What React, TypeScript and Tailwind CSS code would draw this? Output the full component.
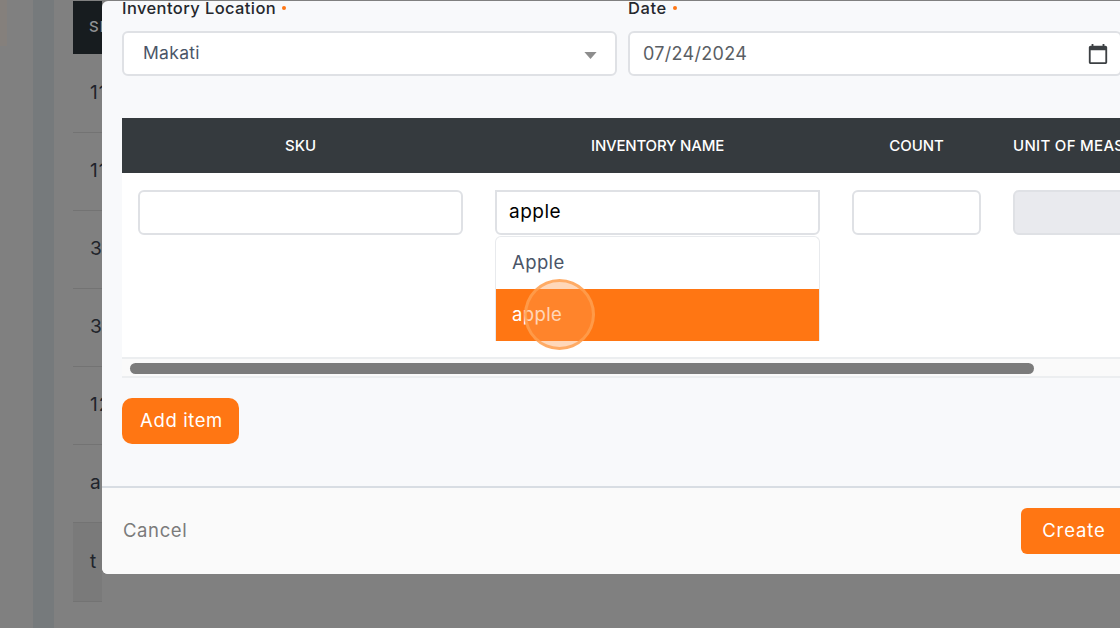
const font = { fontFamily: "Inter, 'Open Sans', sans-serif" };

const bgRows = ["11", "11", "3", "3", "12", "a", "t"];

function Dot() {
  return <span className="ml-[6px] mb-[1px] inline-block h-[4px] w-[4px] rounded-full bg-[#ff7613]" />;
}

function BackgroundTable() {
  return (
    <div className="mt-[1px] w-[29px] shrink-0 overflow-hidden whitespace-nowrap text-[#20242b]">
      <div className="flex h-[53px] items-center bg-[#171c1f] pl-[16px] text-[15px] font-medium tracking-[1px] text-[#8f9294]">SK</div>
      {bgRows.map((text, i) => (
        <div
          key={i}
          className={`flex items-center border-b border-[#737373] pl-[17px] text-[19px] tracking-[1px] ${i === 0 || i === 6 ? "h-[79px]" : "h-[78px]"} ${i === 6 ? "bg-[#7a7a7a]" : ""}`}
        >
          {text}
        </div>
      ))}
    </div>
  );
}

export default function App() {
  return (
    <div className="flex h-[628px] w-[1120px] overflow-hidden bg-[#808080]" style={font}>
      <div className="flex w-[73px] shrink-0">
        <div className="w-[33px]">
          <div className="h-[46px] w-[7px] bg-[#85807c]" />
        </div>
        <div className="w-[21px] bg-[#767a7c]" />
      </div>
      <BackgroundTable />

      <div className="mt-[1px] flex h-[573px] w-[1041px] shrink-0 flex-col overflow-hidden rounded-[6px] bg-[#f8f9fb]">
        <div className="h-[485px] px-[20px]">
          <div className="flex gap-[11px]">
            <div className="w-[495px]">
              <div className="flex h-[30px] items-center pb-[16px] text-[16.5px] font-medium leading-none tracking-[0.4px] text-[#25282d]">
                Inventory Location <Dot />
              </div>
              <div className="flex h-[45px] items-center justify-between rounded-[6px] border-2 border-[#dfe1e5] bg-white pl-[19px] pr-[18px] text-[17.5px] tracking-[0.3px] text-[#4a5568]">
                Makati
                <svg width="13" height="7" viewBox="0 0 14 8" className="mt-[4px]">
                  <polygon points="0,0 14,0 7,8" fill="#8d8d8d" />
                </svg>
              </div>
            </div>
            <div className="w-[494px]">
              <div className="flex h-[30px] items-center pb-[16px] text-[16.5px] font-medium leading-none tracking-[0.6px] text-[#25282d]">
                Date <Dot />
              </div>
              <div className="flex h-[45px] items-center justify-between rounded-[6px] border-2 border-[#dfe1e5] bg-white pl-[13px] pr-[11px] text-[18px] tracking-[0.3px] text-[#5a5e64]">
                07/24/2024
                <svg width="22" height="22" viewBox="0 0 24 24">
                  <path
                    d="M20 3h-1V1h-2v2H7V1H5v2H4c-1.1 0-2 .9-2 2v16c0 1.1.9 2 2 2h16c1.1 0 2-.9 2-2V5c0-1.1-.9-2-2-2zm0 18H4V8h16v13z"
                    fill="#3c4043"
                  />
                </svg>
              </div>
            </div>
          </div>

          <div className="mt-[42px]">
            <div className="flex h-[55px] items-center whitespace-nowrap bg-[#353a3e] pt-[1px] text-center text-[15px] font-medium text-white">
              <div className="w-[357px]">SKU</div>
              <div className="w-[357px] tracking-[-0.2px]">INVENTORY NAME</div>
              <div className="w-[161px]">COUNT</div>
              <div className="w-[125px] overflow-hidden pl-[16px] text-left tracking-[0.3px]">UNIT OF MEASURE</div>
            </div>

            <div className="flex h-[186px] border-b-2 border-[#eceef0] bg-white pt-[17px]">
              <div className="w-[357px] px-[16px]">
                <div className="h-[45px] rounded-[6px] border-2 border-[#dfe1e5] bg-white" />
              </div>
              <div className="relative w-[357px] px-[16px]">
                <div className="flex h-[45px] items-center rounded-b-[6px] border-2 border-[#dfe1e5] bg-white pl-[12px] text-[19px] tracking-[0.5px] text-black">
                  apple
                </div>
                <div className="absolute left-[16px] top-[46px] w-[325px] overflow-hidden rounded-t-[6px] border border-b-0 border-[#e8eaed] bg-white text-[18.5px] tracking-[0.4px]">
                  <div className="flex h-[52px] items-center pl-[16px] text-[#4a5568]">Apple</div>
                  <div className="flex h-[52px] items-center bg-[#ff7613] pl-[16px] text-white">apple</div>
                </div>
                <div className="absolute left-[45px] top-[89px] h-[71px] w-[71px] rounded-full border-[3px] border-[#ffa050]/80 bg-[#ff9a50]/40" />
              </div>
              <div className="w-[161px] px-[16px]">
                <div className="h-[45px] rounded-[6px] border-2 border-[#dfe1e5] bg-white" />
              </div>
              <div className="w-[125px] pl-[16px]">
                <div className="h-[45px] w-[140px] rounded-[6px] border-2 border-[#dfe1e5] bg-[#e9eaee]" />
              </div>
            </div>

            <div className="flex h-[19px] items-start border-b-2 border-[#eceef0] bg-[#fafafa] pl-[8px] pt-[4px]">
              <div className="h-[11px] w-[904px] rounded-full bg-[#7b7b7b]" />
            </div>
          </div>

          <button className="mt-[20px] flex h-[46px] w-[117px] items-center justify-center rounded-[10px] bg-[#ff7613] pl-[2px] text-[18.5px] tracking-[0.6px] text-white">
            Add item
          </button>
        </div>

        <div className="flex flex-1 items-center justify-between border-t-2 border-[#d8dde3] bg-[#fafafa] pl-[21px] pr-[16px]">
          <span className="text-[18.5px] tracking-[0.6px] text-[#7b7b7b]">Cancel</span>
          <button className="flex h-[46px] w-[106px] items-center justify-center rounded-[6px] bg-[#ff7613] text-[18.5px] tracking-[0.9px] text-white">
            Create
          </button>
        </div>
      </div>
    </div>
  );
}
